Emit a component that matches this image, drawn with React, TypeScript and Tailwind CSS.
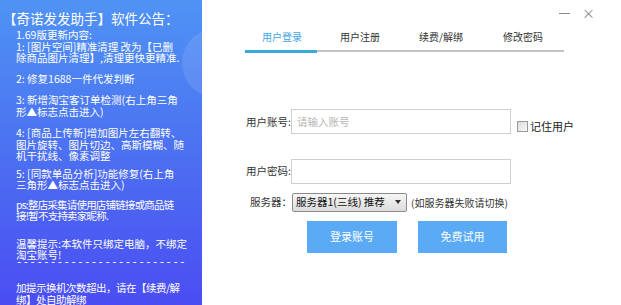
import { useState } from 'react';

const NOTICE: { lines: string[]; mt: string; track?: string }[] = [
  { mt: 'mt-[2px]', lines: ['1.69版更新内容:', '1: [图片空间]精准清理 改为【已删', '除商品图片清理】,清理更快更精准.'] },
  { mt: 'mt-[9px]', lines: ['2: 修复1688一件代发判断'] },
  { mt: 'mt-[10px]', lines: ['3: 新增淘宝客订单检测(右上角三角', '形▲标志点击进入)'] },
  { mt: 'mt-[10px]', lines: ['4: [商品上传新]增加图片左右翻转、', '图片旋转、图片切边、高斯模糊、随', '机干扰线、像素调整'] },
  { mt: 'mt-[6px]', lines: ['5: [同款单品分析]功能修复(右上角', '三角形▲标志点击进入)'] },
  { mt: 'mt-[8px]', track: 'tracking-[-0.8px]', lines: ['ps:整店采集请使用店铺链接或商品链', '接!暂不支持卖家昵称.'] },
  { mt: 'mt-[16px]', lines: ['温馨提示:本软件只绑定电脑，不绑定', '淘宝账号!'] },
];

const TABS = [
  { label: '用户登录', ml: 'ml-[17px]' },
  { label: '用户注册', ml: 'ml-[38px]' },
  { label: '续费/解绑', ml: 'ml-[39px]' },
  { label: '修改密码', ml: 'ml-[40px]' },
];

function NoticePanel() {
  return (
    <div className="relative w-[202px] h-full shrink-0 overflow-hidden bg-[linear-gradient(180deg,#4f93f4_0%,#4c74f1_45%,#4b4df3_100%)] text-white">
      <div
        aria-hidden
        className="absolute left-[182px] top-[28px] w-[70px] h-[70px] rounded-full bg-white/10 pointer-events-none"
      />
      <div className="relative pl-[3px] pt-[9px] text-[13.5px] leading-[18px] whitespace-nowrap">
        【奇诺发发助手】软件公告：
      </div>
      <div className="relative pl-[16px] text-[10.5px] leading-[11.5px] whitespace-nowrap">
        {NOTICE.map((b, i) => (
          <div key={i} className={`${b.mt} ${b.track ?? ''}`}>
            {b.lines.map((l) => (
              <div key={l}>{l}</div>
            ))}
          </div>
        ))}
        <div className="mt-[-4px] font-['Liberation_Mono',monospace] tracking-[0.5px]">
          -------------------------
        </div>
        <div className="mt-[14px] tracking-[-0.5px]">
          <div>加提示换机次数超出，请在【续费/解</div>
          <div>绑】处自助解绑</div>
        </div>
      </div>
    </div>
  );
}

function LoginPanel() {
  const [remember, setRemember] = useState(false);

  return (
    <div className="relative flex-1 h-full bg-white text-[10.5px] text-[#333]">
      <div className="absolute top-[4px] right-[26px] flex items-center gap-[12px] text-[#888]">
        <span className="block w-[11px] h-px bg-[#888]" />
        <span className="text-[13px] leading-[18px]">×</span>
      </div>

      <div className="ml-[43px] w-[319px] pt-[28px]">
        <div className="flex h-[22px] items-start leading-[18px] text-[10px]">
          {TABS.map((t, i) => (
            <span key={t.label} className={`${t.ml} ${i === 0 ? 'text-[#3ea6e2]' : 'text-[#333]'}`}>
              {t.label}
            </span>
          ))}
        </div>
        <div className="relative h-[2px] bg-[#c4c4c4]">
          <div className="absolute left-0 top-[-0.5px] h-[3px] w-[72px] bg-[#3aa9dc]" />
        </div>
      </div>

      <div className="mt-[57px] flex items-center">
        <div className="w-[89px] text-right leading-[14px]">用户账号:</div>
        <div className="w-[220px] h-[25px] border border-[#cfcfcf] flex items-center pl-[5px] text-[#b5b5b5]">
          请输入账号
        </div>
        <label className="ml-[6px] mt-[9px] flex items-center gap-[2px] text-[11px] text-[#222] cursor-pointer">
          <span
            onClick={() => setRemember(!remember)}
            className={`block w-[11px] h-[11px] border border-[#999] ${remember ? 'bg-[#3aa9dc]' : 'bg-[linear-gradient(135deg,#dcdcdc,#f8f8f8)]'}`}
          />
          记住用户
        </label>
      </div>

      <div className="mt-[24px] flex items-center">
        <div className="w-[89px] text-right leading-[14px]">用户密码:</div>
        <div className="w-[220px] h-[25px] border border-[#cfcfcf]" />
      </div>

      <div className="mt-[9px] flex items-center">
        <div className="w-[90px] text-right leading-[14px]">服务器：</div>
        <div className="w-[115px] h-[19px] rounded-[2px] border border-[#8a8a8a] bg-[linear-gradient(180deg,#f6f6f6,#dcdcdc)] flex items-center justify-between pl-[3px] pr-[5px] text-[#111]">
          <span>服务器1(三线) 推荐</span>
          <span className="block w-0 h-0 border-l-[3px] border-r-[3px] border-t-[4px] border-l-transparent border-r-transparent border-t-[#333]" />
        </div>
        <span className="ml-[4px] text-[10px] text-[#333]">(如服务器失败请切换)</span>
      </div>

      <div className="mt-[9px] ml-[105px] flex gap-[21px]">
        <button className="w-[90px] h-[32px] bg-[#5aaaf5] text-white text-[11px]">登录账号</button>
        <button className="w-[89px] h-[32px] bg-[#5aaaf5] text-white text-[11px]">免费试用</button>
      </div>
    </div>
  );
}

export default function App() {
  return (
    <div className="flex w-[621px] h-[305px] overflow-hidden bg-white font-['Noto_Sans_CJK_SC','Noto_Sans',sans-serif]">
      <NoticePanel />
      <LoginPanel />
    </div>
  );
}
